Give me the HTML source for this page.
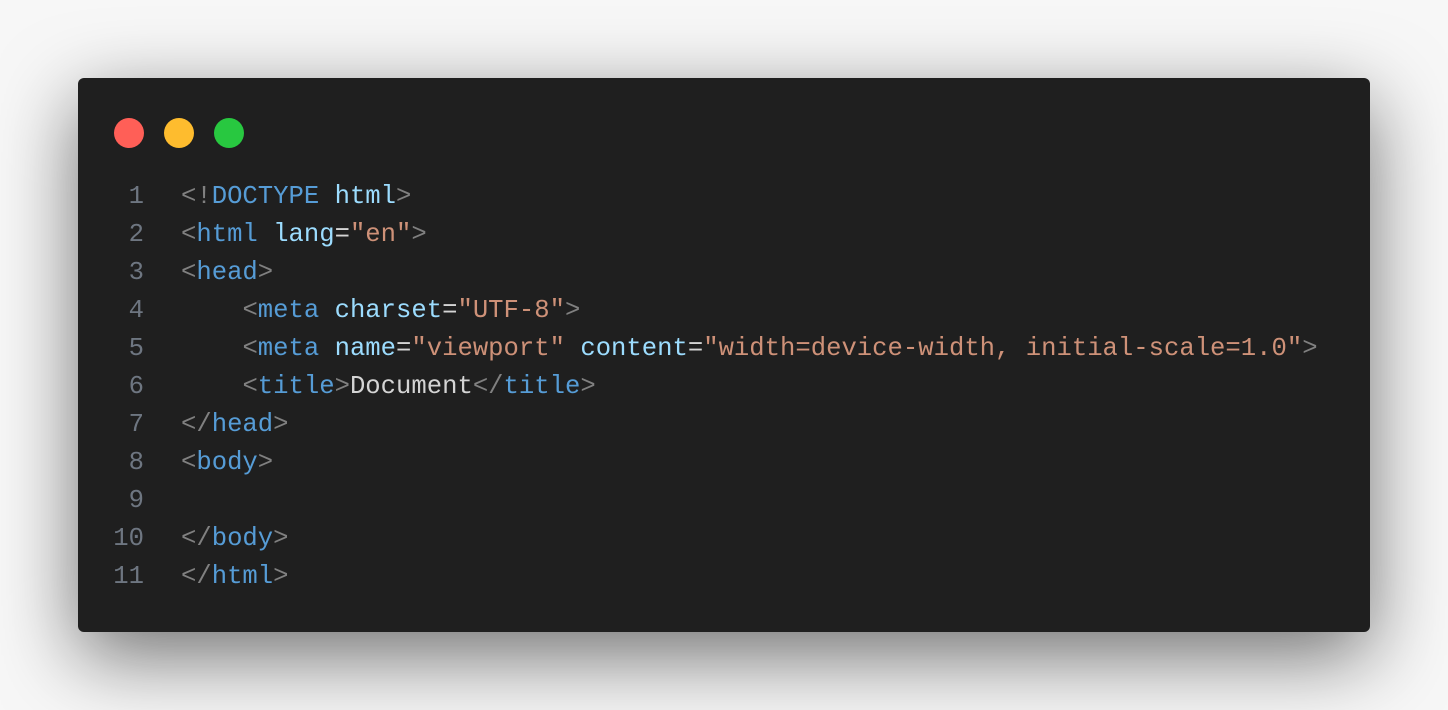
<!DOCTYPE html>
<html><head><style>
body{margin:0;width:1448px;height:710px;background:#f7f7f7;overflow:hidden;position:relative}
.win{position:absolute;left:78px;top:78px;width:1292px;height:554px;background:#1f1f1f;border-radius:6px;box-shadow:0 24px 80px rgba(0,0,0,0.55)}
.dot{position:absolute;top:40px;width:30px;height:30px;border-radius:50%}
.code{position:absolute;left:0;top:100px;font-family:"Liberation Mono",monospace;font-size:25.6px;line-height:38px;color:#d4d4d4;white-space:pre}
.ln{display:inline-block;width:66px;text-align:right;color:#6e7681;margin-right:37px}
.p{color:#808080}.t{color:#569cd6}.a{color:#9cdcfe}.s{color:#ce9178}
</style></head><body>
<div class="win">
<div class="dot" style="left:36px;background:#ff5f57"></div>
<div class="dot" style="left:86px;background:#febc2e"></div>
<div class="dot" style="left:136px;background:#28c840"></div>
<div class="code"><span class="ln">1</span><span class="p">&lt;!</span><span class="t">DOCTYPE</span> <span class="a">html</span><span class="p">&gt;</span>
<span class="ln">2</span><span class="p">&lt;</span><span class="t">html</span> <span class="a">lang</span>=<span class="s">"en"</span><span class="p">&gt;</span>
<span class="ln">3</span><span class="p">&lt;</span><span class="t">head</span><span class="p">&gt;</span>
<span class="ln">4</span>    <span class="p">&lt;</span><span class="t">meta</span> <span class="a">charset</span>=<span class="s">"UTF-8"</span><span class="p">&gt;</span>
<span class="ln">5</span>    <span class="p">&lt;</span><span class="t">meta</span> <span class="a">name</span>=<span class="s">"viewport"</span> <span class="a">content</span>=<span class="s">"width=device-width, initial-scale=1.0"</span><span class="p">&gt;</span>
<span class="ln">6</span>    <span class="p">&lt;</span><span class="t">title</span><span class="p">&gt;</span>Document<span class="p">&lt;/</span><span class="t">title</span><span class="p">&gt;</span>
<span class="ln">7</span><span class="p">&lt;/</span><span class="t">head</span><span class="p">&gt;</span>
<span class="ln">8</span><span class="p">&lt;</span><span class="t">body</span><span class="p">&gt;</span>
<span class="ln">9</span>
<span class="ln">10</span><span class="p">&lt;/</span><span class="t">body</span><span class="p">&gt;</span>
<span class="ln">11</span><span class="p">&lt;/</span><span class="t">html</span><span class="p">&gt;</span></div>
</div>
</body></html>
